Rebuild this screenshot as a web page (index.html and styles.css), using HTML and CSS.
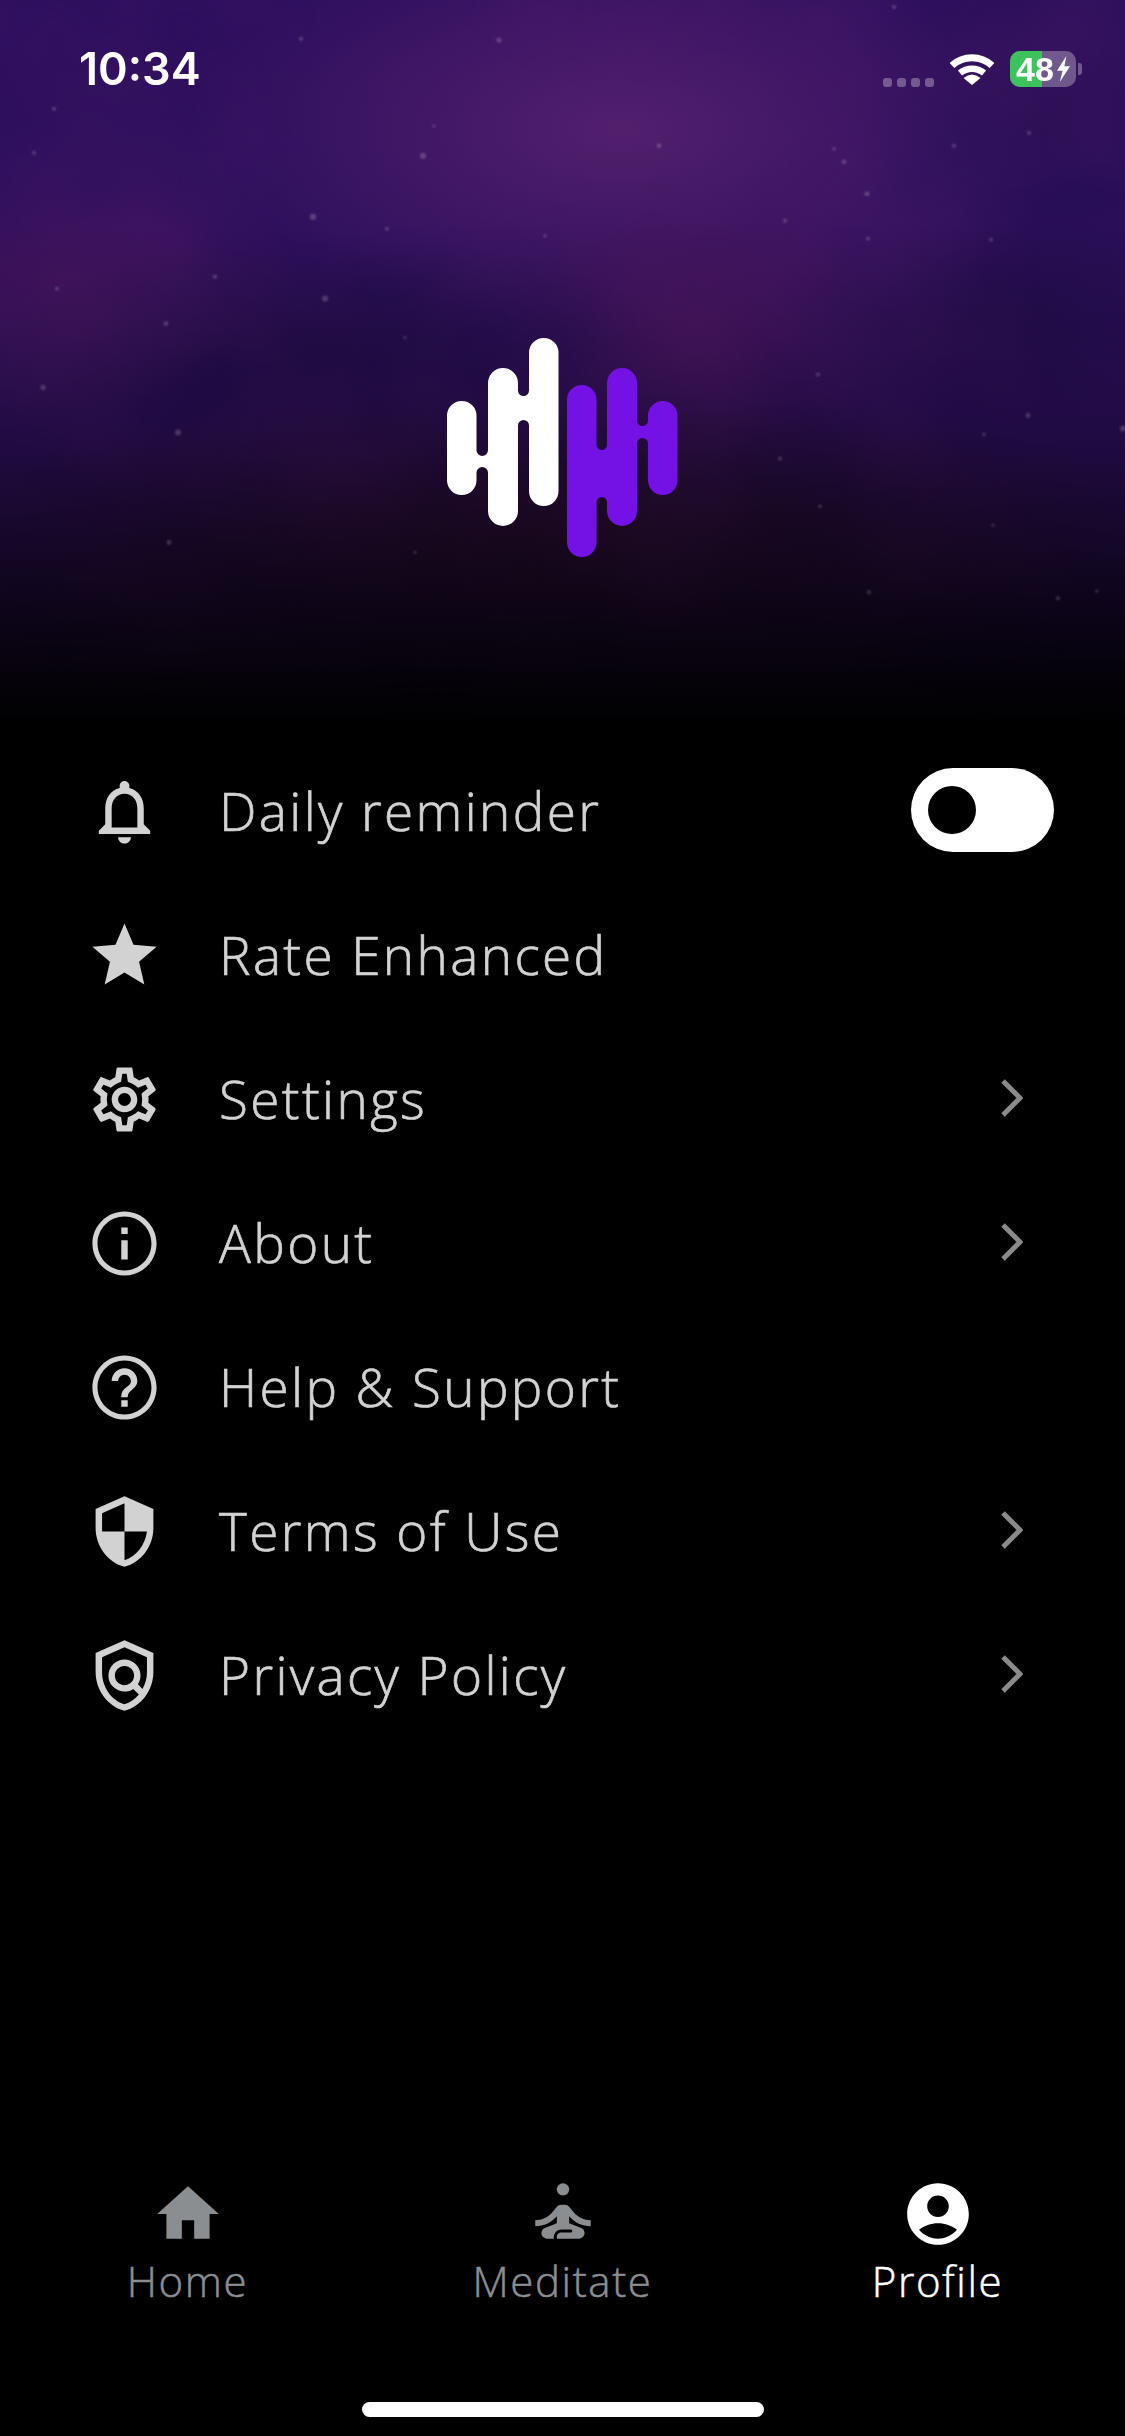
FILE: index.html
```html
<!DOCTYPE html>
<html lang="en">
<head>
<meta charset="utf-8">
<title>Profile</title>
<link rel="stylesheet" href="styles.css">
</head>
<body>
<div class="screen">
  <header class="hero">
    <svg class="hero-sky" viewBox="0 0 1125 740" preserveAspectRatio="none" aria-hidden="true">
      <defs>
        <linearGradient id="fade" x1="0" y1="0" x2="0" y2="1">
          <stop offset="0" stop-color="#000" stop-opacity="0"/>
          <stop offset="0.3" stop-color="#000" stop-opacity="0.02"/>
          <stop offset="0.47" stop-color="#000" stop-opacity="0.15"/>
          <stop offset="0.61" stop-color="#000" stop-opacity="0.32"/>
          <stop offset="0.74" stop-color="#000" stop-opacity="0.55"/>
          <stop offset="0.86" stop-color="#000" stop-opacity="0.8"/>
          <stop offset="0.98" stop-color="#000" stop-opacity="1"/>
        </linearGradient>
        <radialGradient id="glow-a"><stop offset="0" stop-color="#55206f" stop-opacity="0.95"/><stop offset="1" stop-color="#55206f" stop-opacity="0"/></radialGradient>
        <radialGradient id="glow-b"><stop offset="0" stop-color="#4a1560" stop-opacity="0.9"/><stop offset="1" stop-color="#4a1560" stop-opacity="0"/></radialGradient>
        <radialGradient id="glow-c"><stop offset="0" stop-color="#1c0c42" stop-opacity="0.9"/><stop offset="1" stop-color="#1c0c42" stop-opacity="0"/></radialGradient>
        <radialGradient id="glow-d"><stop offset="0" stop-color="#2b0e2e" stop-opacity="0.9"/><stop offset="1" stop-color="#2b0e2e" stop-opacity="0"/></radialGradient>
        <filter id="cloud" x="0" y="0" width="100%" height="100%" color-interpolation-filters="sRGB">
          <feTurbulence type="fractalNoise" baseFrequency="0.004 0.004" numOctaves="3" seed="23"/>
          <feColorMatrix values="0 0 0 0 0.33  0 0 0 0 0.11  0 0 0 0 0.42  1.1 0 0 0 -0.45"/>
        </filter>
        <filter id="soft"><feGaussianBlur stdDeviation="0.8"/></filter>
      </defs>
      <rect width="1125" height="740" fill="#2d0f5e"/>
      <ellipse cx="620" cy="130" rx="430" ry="210" fill="url(#glow-a)"/>
      <ellipse cx="700" cy="330" rx="200" ry="150" fill="url(#glow-b)"/>
      <ellipse cx="60" cy="280" rx="240" ry="130" fill="url(#glow-b)" opacity="0.7"/>
      <ellipse cx="1060" cy="120" rx="220" ry="240" fill="url(#glow-c)" opacity="0.35"/>
      <ellipse cx="330" cy="345" rx="340" ry="110" fill="url(#glow-c)" opacity="0.75"/>
      <ellipse cx="1000" cy="320" rx="220" ry="100" fill="url(#glow-c)" opacity="0.6"/>
      <ellipse cx="560" cy="540" rx="640" ry="150" fill="url(#glow-d)"/>
      <rect width="1125" height="740" filter="url(#cloud)" opacity="0.8"/>
      <rect width="1125" height="740" fill="url(#fade)"/>
      <g class="hero-stars" filter="url(#soft)">
        <circle cx="423" cy="156" r="3"/><circle cx="313" cy="217" r="3.2"/><circle cx="325" cy="299" r="3"/>
        <circle cx="178" cy="433" r="3"/><circle cx="867" cy="194" r="2.6"/><circle cx="844" cy="162" r="2.4"/>
        <circle cx="659" cy="146" r="2.4"/><circle cx="166" cy="324" r="2.4"/><circle cx="43" cy="388" r="2.6"/>
        <circle cx="215" cy="277" r="2.2"/><circle cx="387" cy="229" r="2"/><circle cx="1028" cy="416" r="2.4"/>
        <circle cx="1123" cy="429" r="3"/><circle cx="499" cy="40" r="2.6"/><circle cx="301" cy="39" r="2"/>
        <circle cx="54" cy="109" r="2"/><circle cx="34" cy="153" r="2"/><circle cx="57" cy="289" r="2"/>
        <circle cx="818" cy="375" r="2"/><circle cx="780" cy="459" r="2"/><circle cx="991" cy="240" r="2"/>
        <circle cx="954" cy="146" r="2"/><circle cx="1029" cy="133" r="2"/><circle cx="785" cy="221" r="2"/>
        <circle cx="868" cy="239" r="2"/><circle cx="169" cy="543" r="2.4"/><circle cx="1058" cy="599" r="2"/>
        <circle cx="869" cy="593" r="2"/><circle cx="984" cy="435" r="1.8"/><circle cx="434" cy="126" r="1.6"/>
        <circle cx="834" cy="149" r="1.8"/><circle cx="545" cy="236" r="1.8"/><circle cx="405" cy="338" r="1.6"/>
        <circle cx="894" cy="7" r="2"/><circle cx="820" cy="507" r="1.8"/><circle cx="993" cy="526" r="1.6"/>
        <circle cx="415" cy="553" r="1.6"/><circle cx="1097" cy="592" r="1.6"/>
      </g>
    </svg>

    <div class="status">
      <span class="status-time">10:34</span>
      <div class="status-right">
        <div class="signal"><i></i><i></i><i></i><i></i></div>
        <svg class="wifi" viewBox="0 0 46 33" aria-hidden="true">
          <path d="M3 13.5 A30 30 0 0 1 43 13.5" fill="none" stroke="#fff" stroke-width="7"/>
          <path d="M11 21 A19 19 0 0 1 35 21" fill="none" stroke="#fff" stroke-width="6.5"/>
          <path d="M14.5 26 Q23 19 31.500 26 L23 33 Z" fill="#fff"/>
        </svg>
        <div class="battery">
          <div class="battery-body">
            <span class="battery-level"></span>
            <span class="battery-text">48</span>
            <svg class="bolt" viewBox="0 0 16 28" aria-hidden="true"><path d="M11 0 L1 16 H7 L4 28 L15 11 H9 Z" fill="#fff"/></svg>
          </div>
          <span class="battery-nub"></span>
        </div>
      </div>
    </div>

    <svg class="logo" viewBox="447 338 230.500 219" aria-hidden="true">
      <path fill="#fff" d="M447 415.750A14.750 14.750 0 0 1 476.500 415.750V450.250A5.750 5.750 0 0 0 488 450.250V383A15 15 0 0 1 518 383V390.500A5.500 5.500 0 0 0 529 390.500V352.750A14.750 14.750 0 0 1 558.500 352.750V491.250A14.750 14.750 0 0 1 529 491.250V425.500A5.500 5.500 0 0 0 518 425.500V511A15 15 0 0 1 488 511V472.750A5.750 5.750 0 0 0 476.500 472.750V480.250A14.750 14.750 0 0 1 447 480.250Z"/>
      <path fill="#7412e6" d="M567 399.750A14.750 14.750 0 0 1 596.500 399.750V444.750A5.250 5.250 0 0 0 607 444.750V383A15 15 0 0 1 637 383V420.500A5.500 5.500 0 0 0 648 420.500V415.750A14.750 14.750 0 0 1 677.500 415.750V480.250A14.750 14.750 0 0 1 648 480.250V443.500A5.500 5.500 0 0 0 637 443.500V511A15 15 0 0 1 607 511V502.250A5.250 5.250 0 0 0 596.500 502.250V542.250A14.750 14.750 0 0 1 567 542.250Z"/>
    </svg>
  </header>

  <main class="menu">
    <div class="row">
      <svg class="row-icon" viewBox="0 0 24 24"><path d="M12 22c1.100 0 2-.9 2-2h-4c0 1.100.9 2 2 2zm6-6v-5c0-3.070-1.630-5.640-4.500-6.320V4c0-.83-.67-1.500-1.500-1.500s-1.500.67-1.500 1.500v.68C7.640 5.360 6 7.920 6 11v5l-2 2v1h16v-1l-2-2zm-2 1H8v-6c0-2.480 1.510-4.500 4-4.500s4 2.020 4 4.500v6z"/></svg>
      <span class="row-label">Daily reminder</span>
      <div class="toggle"><span class="toggle-knob"></span></div>
    </div>
    <div class="row">
      <svg class="row-icon" viewBox="0 0 24 24"><path d="M12 17.270L18.180 21l-1.640-7.030L22 9.240l-7.190-.61L12 2 9.190 8.630 2 9.240l5.460 4.730L5.820 21z"/></svg>
      <span class="row-label">Rate Enhanced</span>
    </div>
    <div class="row">
      <svg class="row-icon" viewBox="0 0 24 24"><path d="M19.430 12.980c.04-.32.07-.64.07-.98 0-.34-.03-.66-.07-.98l2.110-1.650c.19-.15.24-.42.12-.64l-2-3.460c-.09-.16-.26-.25-.44-.25-.06 0-.12.01-.17.03l-2.490 1c-.52-.4-1.080-.73-1.690-.98l-.38-2.650C14.460 2.180 14.250 2 14 2h-4c-.25 0-.46.18-.49.42l-.38 2.650c-.61.25-1.170.59-1.690.98l-2.490-1c-.06-.02-.12-.03-.18-.03-.17 0-.34.09-.43.25l-2 3.460c-.13.22-.07.49.12.64l2.110 1.650c-.04.32-.07.65-.07.98 0 .33.03.66.07.98l-2.110 1.650c-.19.15-.24.42-.12.64l2 3.460c.09.16.26.25.44.25.06 0 .12-.01.17-.03l2.490-1c.52.4 1.080.73 1.690.98l.38 2.650c.03.24.24.42.49.42h4c.25 0 .46-.18.49-.42l.38-2.650c.61-.25 1.170-.59 1.690-.98l2.490 1c.06.02.12.03.18.03.17 0 .34-.09.43-.25l2-3.460c.12-.22.07-.49-.12-.64l-2.110-1.650zm-1.980-1.710c.04.31.05.52.05.73 0 .21-.02.43-.05.73l-.14 1.130.89.7 1.080.84-.7 1.210-1.270-.51-1.040-.42-.9.68c-.43.32-.84.56-1.250.73l-1.060.43-.16 1.130-.2 1.350h-1.400l-.19-1.350-.16-1.130-1.060-.43c-.43-.18-.83-.41-1.230-.71l-.91-.7-1.060.43-1.270.51-.7-1.210 1.080-.84.89-.7-.14-1.130c-.03-.31-.05-.54-.05-.74s.02-.43.05-.73l.14-1.130-.89-.7-1.080-.84.7-1.210 1.270.51 1.040.42.9-.68c.43-.32.84-.56 1.250-.73l1.060-.43.16-1.130.2-1.350h1.390l.19 1.350.16 1.130 1.060.43c.43.18.83.41 1.230.71l.91.7 1.060-.43 1.270-.51.7 1.210-1.070.85-.89.7.14 1.130zM12 8c-2.210 0-4 1.790-4 4s1.790 4 4 4 4-1.790 4-4-1.790-4-4-4zm0 6c-1.100 0-2-.9-2-2s.9-2 2-2 2 .9 2 2-.9 2-2 2z"/></svg>
      <span class="row-label">Settings</span>
      <svg class="chevron" viewBox="0 0 22 38"><path d="M2 2 L19 19 L2 36"/></svg>
    </div>
    <div class="row">
      <svg class="row-icon" viewBox="0 0 24 24"><path d="M11 7h2v2h-2zm0 4h2v6h-2zm1-9C6.480 2 2 6.480 2 12s4.480 10 10 10 10-4.480 10-10S17.520 2 12 2zm0 18.400c-4.630 0-8.400-3.770-8.400-8.400S7.370 3.600 12 3.600s8.400 3.770 8.400 8.400-3.770 8.400-8.400 8.400z"/></svg>
      <span class="row-label">About</span>
      <svg class="chevron" viewBox="0 0 22 38"><path d="M2 2 L19 19 L2 36"/></svg>
    </div>
    <div class="row">
      <svg class="row-icon" viewBox="0 0 24 24"><path d="M11 18h2v-2h-2v2zm1-16C6.480 2 2 6.480 2 12s4.480 10 10 10 10-4.480 10-10S17.520 2 12 2zm0 18.400c-4.630 0-8.400-3.770-8.400-8.400S7.370 3.600 12 3.600s8.400 3.770 8.400 8.400-3.770 8.400-8.400 8.400zM12 6c-2.210 0-4 1.790-4 4h2c0-1.100.9-2 2-2s2 .9 2 2c0 2-3 1.750-3 5h2c0-2.250 3-2.500 3-5 0-2.210-1.790-4-4-4z"/></svg>
      <span class="row-label">Help &amp; Support</span>
    </div>
    <div class="row">
      <svg class="row-icon" viewBox="0 0 24 24"><path d="M12 1L3 5v6c0 5.550 3.840 10.740 9 12 5.160-1.260 9-6.450 9-12V5l-9-4zm0 10.990h7c-.53 4.120-3.280 7.790-7 8.940V12H5V6.300l7-3.110v8.800z"/></svg>
      <span class="row-label">Terms of Use</span>
      <svg class="chevron" viewBox="0 0 22 38"><path d="M2 2 L19 19 L2 36"/></svg>
    </div>
    <div class="row">
      <svg class="row-icon" viewBox="0 0 24 24"><path fill-rule="evenodd" d="M21 5l-9-4-9 4v6c0 5.550 3.840 10.740 9 12 5.160-1.260 9-6.450 9-12V5zM19 11c0 1.850-.51 3.650-1.380 5.210l-1.450-1.450c1.290-1.940 1.070-4.580-.64-6.290-1.950-1.950-5.120-1.950-7.070 0-1.950 1.950-1.950 5.120 0 7.070 1.710 1.710 4.350 1.920 6.290.64l1.720 1.720c-1.190 1.430-2.730 2.550-4.470 3.030C7.980 19.910 5 15.670 5 11V6.300l7-3.110 7 3.110V11zM12 15c-1.660 0-3-1.340-3-3s1.340-3 3-3 3 1.340 3 3-1.340 3-3 3z"/></svg>
      <span class="row-label">Privacy Policy</span>
      <svg class="chevron" viewBox="0 0 22 38"><path d="M2 2 L19 19 L2 36"/></svg>
    </div>
  </main>

  <nav class="tabs">
    <div class="tab">
      <svg class="tab-icon" viewBox="0 0 24 24"><path d="M10 20v-6h4v6h5v-8h3L12 3 2 12h3v8z"/></svg>
      <span class="tab-label">Home</span>
    </div>
    <div class="tab">
      <svg class="tab-icon" viewBox="0 0 24 24"><circle cx="12" cy="4" r="2"/><path d="M21 16v-2c-2.240 0-4.160-.96-5.600-2.680l-1.340-1.600C13.680 9.260 13.120 9 12.530 9h-1.050c-.59 0-1.150.26-1.530.72l-1.340 1.600C7.160 13.040 5.240 14 3 14v2c2.770 0 5.190-1.170 7-3.250V15l-3.880 1.550C5.450 16.820 5 17.480 5 18.200 5 19.200 5.800 20 6.800 20H9v-.5c0-1.380 1.120-2.500 2.500-2.500h3c.28 0 .5.220.5.500s-.22.500-.5.500h-3c-.83 0-1.500.67-1.500 1.500v.5h7.200c1 0 1.800-.8 1.800-1.800 0-.72-.45-1.380-1.120-1.650L14 15v-2.250C15.810 14.830 18.230 16 21 16z"/></svg>
      <span class="tab-label">Meditate</span>
    </div>
    <div class="tab tab-active">
      <svg class="tab-icon" viewBox="0 0 24 24"><path d="M12 2C6.480 2 2 6.480 2 12s4.480 10 10 10 10-4.480 10-10S17.520 2 12 2zm0 4c1.930 0 3.500 1.570 3.500 3.500S13.930 13 12 13s-3.500-1.570-3.500-3.500S10.070 6 12 6zm0 14c-2.030 0-4.430-.82-6.140-2.880C7.550 15.800 9.680 15 12 15s4.450.8 6.140 2.120C16.430 19.180 14.030 20 12 20z"/></svg>
      <span class="tab-label">Profile</span>
    </div>
  </nav>

  <div class="home-bar"><span class="home-indicator"></span></div>
</div>
</body>
</html>
```
FILE: styles.css
```css
* { box-sizing: border-box; }
html, body { margin: 0; padding: 0; background: #000; }
body { font-family: "Open Sans", "Noto Sans", sans-serif; }

.screen {
  width: 1125px;
  height: 2436px;
  display: flex;
  flex-direction: column;
  background: #000;
  overflow: hidden;
}

.hero {
  position: relative;
  height: 739px;
  flex: none;
  display: flex;
  flex-direction: column;
}
.hero-sky {
  position: absolute;
  inset: 0;
  width: 100%;
  height: 100%;
}
.hero-stars circle { fill: #fff; opacity: 0.2; }

.status {
  position: relative;
  display: flex;
  align-items: center;
  justify-content: space-between;
  height: 36px;
  margin-top: 51px;
  padding: 0 43px 0 79px;
}
.status-time {
  font-family: Inter, "Liberation Sans", sans-serif;
  font-size: 45px;
  font-weight: 600;
  line-height: 36px;
  color: #fff;
}
.status-right { display: flex; align-items: center; }
.signal { display: flex; gap: 5px; margin-top: 26px; margin-right: 15px; }
.signal i {
  width: 9px;
  height: 9px;
  border-radius: 3px;
  background: rgba(255, 255, 255, 0.3);
}
.wifi { width: 46px; height: 33px; margin-right: 15px; margin-top: -2px; }
.battery { display: flex; align-items: center; gap: 2px; }
.battery-body {
  position: relative;
  width: 66px;
  height: 36px;
  display: flex;
  align-items: center;
  padding-left: 6px;
  border-radius: 10px;
  background: rgba(255, 255, 255, 0.3);
}
.battery-level {
  position: absolute;
  left: 0;
  top: 0;
  bottom: 0;
  width: 32px;
  border-radius: 10px 0 0 10px;
  background: #3dc25c;
}
.battery-text {
  position: relative;
  font-family: "Liberation Sans", Arial, sans-serif;
  font-size: 34px;
  font-weight: 700;
  line-height: 36px;
  color: #fff;
}
.bolt { position: relative; width: 15px; height: 26px; margin-left: 2px; }
.battery-nub {
  width: 4px;
  height: 12px;
  border-radius: 0 3px 3px 0;
  background: rgba(255, 255, 255, 0.3);
}

.logo {
  position: relative;
  display: block;
  width: 230.5px;
  height: 219px;
  margin: 251px auto 0;
}

.menu { flex: 1; display: flex; flex-direction: column; }
.row {
  height: 144px;
  flex: none;
  display: flex;
  align-items: center;
  padding: 0 71px 0 86px;
}
.row-icon { width: 77px; height: 77px; flex: none; fill: #d2d2d2; }
.row-label {
  margin-left: 56px;
  font-size: 53px;
  font-weight: 300;
  letter-spacing: 2.4px;
  line-height: 72px;
  color: #d2d2d2;
  -webkit-text-stroke: 0.7px #d2d2d2;
}
.toggle {
  margin-left: auto;
  width: 143px;
  height: 84px;
  display: flex;
  align-items: center;
  padding-left: 17px;
  border-radius: 42px;
  background: #fff;
  margin-top: -2px;
}
.toggle-knob { width: 48px; height: 48px; border-radius: 50%; background: #000; }
.chevron {
  margin-left: auto;
  margin-right: 31px;
  margin-bottom: 2px;
  width: 22px;
  height: 38px;
  fill: none;
  stroke: #8a8a8a;
  stroke-width: 5;
}

.tabs { display: grid; grid-template-columns: repeat(3, 375px); flex: none; }
.tab { display: flex; flex-direction: column; align-items: center; color: #8b8e91; }
.tab-active { color: #fff; }
.tab-icon { width: 74px; height: 74px; fill: currentColor; display: block; }
.tab-label {
  margin-top: 2px;
  font-size: 42px;
  font-weight: 300;
  letter-spacing: 1.6px;
  line-height: 56px;
  -webkit-text-stroke: 0.5px currentColor;
}

.home-bar { flex: none; height: 127px; padding-top: 93px; display: flex; justify-content: center; }
.home-indicator { width: 402px; height: 15px; border-radius: 8px; background: #fff; }
```
